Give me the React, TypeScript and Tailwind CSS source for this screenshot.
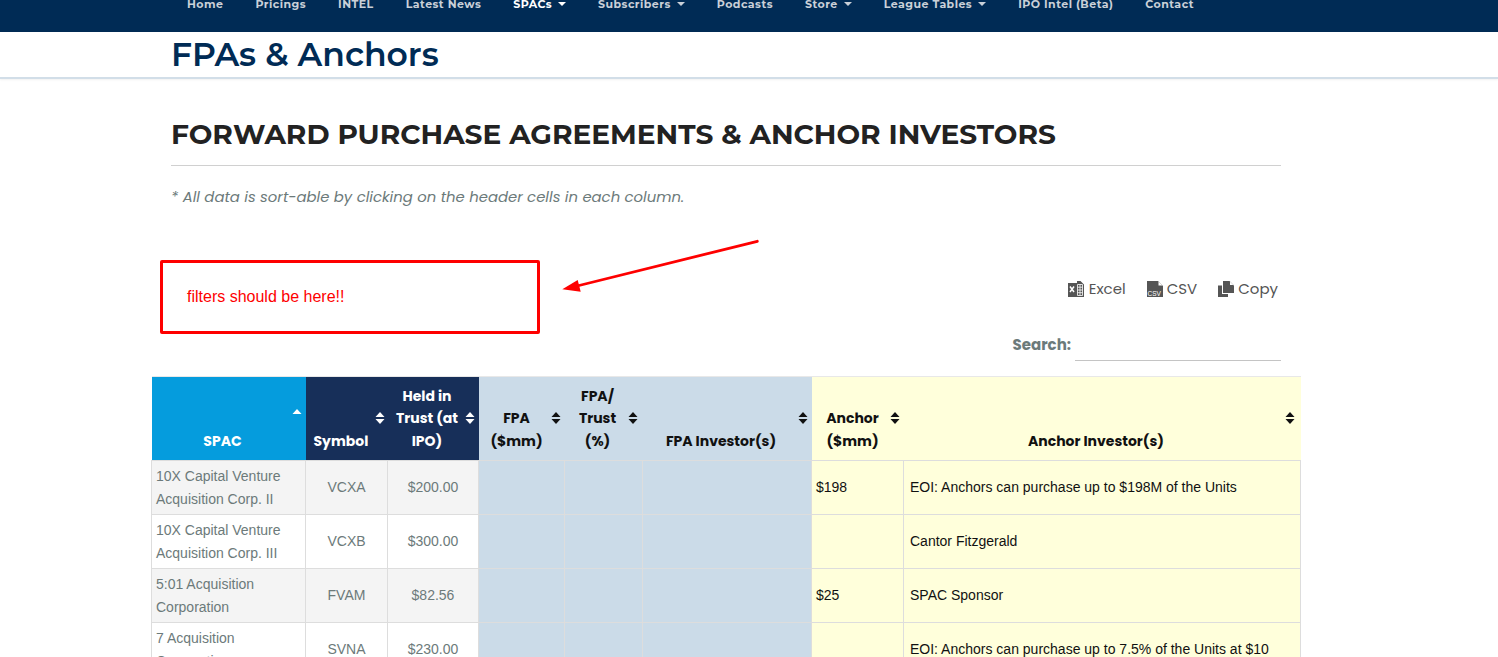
import React from "react";

const mont = "font-['Montserrat','Inter',sans-serif]";

function Sort({ up, pos = "right-[4px]" }: { up?: boolean; pos?: string }) {
  return (
    <svg className={`absolute ${pos} ${up ? "top-[31px]" : "top-[34px]"} w-[10px] h-[14px]`} viewBox="0 0 10 14" fill="currentColor">
      <path d="M5 1 L9.5 6 L0.5 6 Z" />
      {!up && <path d="M5 13 L9.5 8 L0.5 8 Z" />}
    </svg>
  );
}

function ExcelIcon() {
  return (
    <svg width="16" height="16" viewBox="0 0 16 16" className="text-[#555]">
      <path d="M0 2H9V0H12.5L16 3.5V16H0Z" fill="currentColor" />
      <path d="M2 5.5l4 5.5M6 5.5l-4 5.5" stroke="#fff" strokeWidth="1.5" />
      <path d="M9.5 3.5h5v11h-5zM9.5 6.2h5M9.5 9h5M9.5 11.7h5M12 3.5v11" stroke="#fff" strokeWidth="0.8" fill="none" />
    </svg>
  );
}
function CsvIcon() {
  return (
    <svg width="16" height="16" viewBox="0 0 16 16" className="text-[#555]">
      <path d="M0 0H11L16 5V16H0Z" fill="currentColor" />
      <path d="M11.5 0.5L15.5 4.5H11.5Z" fill="#fff" />
      <text x="0.5" y="15" fontSize="6.5" fill="#fff" fontFamily="Liberation Sans, sans-serif">CSV</text>
    </svg>
  );
}
function CopyIcon() {
  return (
    <svg width="16" height="16" viewBox="0 0 16 16" className="text-[#555]">
      <path d="M5 0H11.5L16 4.5V12H5Z" fill="currentColor" />
      <path d="M12 0.5L15.5 4H12Z" fill="#fff" />
      <path d="M0 4.5H4V13H10V16H0Z" fill="currentColor" />
    </svg>
  );
}

const navItems: [string, boolean, boolean][] = [
  ["Home", false, false],
  ["Pricings", false, false],
  ["INTEL", false, false],
  ["Latest News", false, false],
  ["SPACs", true, true],
  ["Subscribers", true, false],
  ["Podcasts", false, false],
  ["Store", true, false],
  ["League Tables", true, false],
  ["IPO Intel (Beta)", false, false],
  ["Contact", false, false],
];

const rows = [
  ["10X Capital Venture Acquisition Corp. II", "VCXA", "$200.00", "$198", "EOI: Anchors can purchase up to $198M of the Units"],
  ["10X Capital Venture Acquisition Corp. III", "VCXB", "$300.00", "", "Cantor Fitzgerald"],
  ["5:01 Acquisition Corporation", "FVAM", "$82.56", "$25", "SPAC Sponsor"],
  ["7 Acquisition Corporation", "SVNA", "$230.00", "", "EOI: Anchors can purchase up to 7.5% of the Units at $10"],
];

const th = "relative align-bottom text-center pr-5 pb-[8px] text-[14px] leading-[22.5px] font-bold";

export default function App() {
  return (
    <div className="relative h-[657px] w-[1498px] overflow-hidden bg-white font-['Poppins','Inter',sans-serif]">
      <nav className="h-8 bg-[#002b55] overflow-hidden">
        <ul className={`flex pl-[187px] -mt-[3px] text-[11px] leading-[14px] font-bold tracking-[0.46px] text-[#c9d0d8] ${mont}`}>
          {navItems.map(([label, caret, active]) => (
            <li key={label} className={`flex items-center mr-[32px] ${active ? "text-white" : ""}`}>
              {label}
              {caret && <span className="ml-[6px] border-x-4 border-x-transparent border-t-4 border-t-current" />}
            </li>
          ))}
        </ul>
      </nav>

      <header className="h-[47px] pl-[171px] border-b-2 border-[#d2dee8] shadow-[0_1px_2px_rgba(0,0,0,0.06)]">
        <h1 className={`text-[33px] leading-[44px] font-semibold text-[#002b55] ${mont}`}>FPAs &amp; Anchors</h1>
      </header>

      <main className="ml-[171px] w-[1110px]">
        <h2 className={`mt-[36px] pb-[12px] text-[28px] leading-[38px] font-bold text-[#222] border-b border-[#d0d0d0] ${mont}`}>
          FORWARD PURCHASE AGREEMENTS &amp; ANCHOR INVESTORS
        </h2>
        <p className="mt-[20px] text-[14.85px] leading-[22px] italic text-[#6c7a7a]">
          * All data is sort-able by clicking on the header cells in each column.
        </p>

        <div className="mt-[69px] flex justify-end gap-[21px] pr-[3px] text-[15px] leading-[24px] text-[#555]">
          <span className="flex items-center gap-[5px]"><ExcelIcon />Excel</span>
          <span className="flex items-center gap-[4px]"><CsvIcon />CSV</span>
          <span className="flex items-center gap-[4px]"><CopyIcon />Copy</span>
        </div>

        <div className="mt-[28px] flex justify-end items-start gap-[4px]">
          <span className="text-[15px] leading-[32px] font-bold text-[#6c7a7a]">Search:</span>
          <div className="w-[206px] h-[32px] border-b border-[#c4c4c4]" />
        </div>

        <table className="mt-[15px] -ml-[20px] w-[1149px] table-fixed border-collapse border-t border-[#e8e8e8]">
          <colgroup>
            <col className="w-[154px]" />
            <col className="w-[82px]" />
            <col className="w-[91px]" />
            <col className="w-[86px]" />
            <col className="w-[78px]" />
            <col className="w-[169px]" />
            <col className="w-[92px]" />
            <col className="w-[397px]" />
          </colgroup>
          <thead>
            <tr className="h-[84px]">
              <th className={`${th} pl-2 bg-[#059cdd] text-white`}>SPAC<Sort up /></th>
              <th className={`${th} pl-2 bg-[#172f59] text-white whitespace-nowrap`}>Symbol<Sort pos="right-[3px]" /></th>
              <th className={`${th} pl-2 bg-[#172f59] text-white`}>Held in Trust (at IPO)<Sort /></th>
              <th className={`${th} pl-[10px] bg-[#cbdbe8] text-[#111]`}>FPA ($mm)<Sort /></th>
              <th className={`${th} pl-2 bg-[#cbdbe8] text-[#111]`}>FPA/ Trust (%)<Sort pos="right-[5px]" /></th>
              <th className={`${th} pl-2 bg-[#cbdbe8] text-[#111]`}>FPA Investor(s)<Sort /></th>
              <th className={`${th} pl-[10px] bg-[#ffffdb] text-[#111]`}>Anchor ($mm)<Sort /></th>
              <th className={`${th} pl-2 bg-[#ffffdb] text-[#111]`}>Anchor Investor(s)<Sort pos="right-[6px]" /></th>
            </tr>
          </thead>
          <tbody className="font-['Liberation_Sans',sans-serif] text-[14px] leading-[22.4px]">
            {rows.map((r, i) => {
              const base = "border border-[#dddddd]";
              const grey = i % 2 === 0 ? "bg-[#f4f4f4]" : "bg-white";
              return (
                <tr key={r[1]} className="h-[54px]">
                  <td className={`${base} ${grey} pl-[4px] pr-1 text-[#6c7a7a]`}>{r[0]}</td>
                  <td className={`${base} ${grey} text-center text-[#6c7a7a]`}>{r[1]}</td>
                  <td className={`${base} ${grey} text-center text-[#6c7a7a]`}>{r[2]}</td>
                  <td className={`${base} bg-[#cbdbe8]`} />
                  <td className={`${base} bg-[#cbdbe8]`} />
                  <td className={`${base} bg-[#cbdbe8]`} />
                  <td className={`${base} bg-[#ffffdb] pl-[4px] text-[#111]`}>{r[3]}</td>
                  <td className={`${base} bg-[#ffffdb] pl-[6px] text-[#111]`}>{r[4]}</td>
                </tr>
              );
            })}
          </tbody>
        </table>
      </main>

      {/* Annotation drawn over the page */}
      <div className="absolute left-[160px] top-[260px] w-[380px] h-[74px] border-[3px] border-[#fe0000] rounded-[2px] pl-[24px] flex items-center font-['Liberation_Sans',sans-serif] text-[16px] text-[#fe0000]">
        filters should be here!!
      </div>
      <svg className="absolute left-[555px] top-[235px] w-[210px] h-[60px]" viewBox="0 0 210 60">
        <path d="M202.3 6.3 L22 51" stroke="#fe0000" strokeWidth="2.8" strokeLinecap="round" />
        <path d="M7.3 54.3 L22.7 45 L25.7 56.7 Z" fill="#fe0000" />
      </svg>
    </div>
  );
}
